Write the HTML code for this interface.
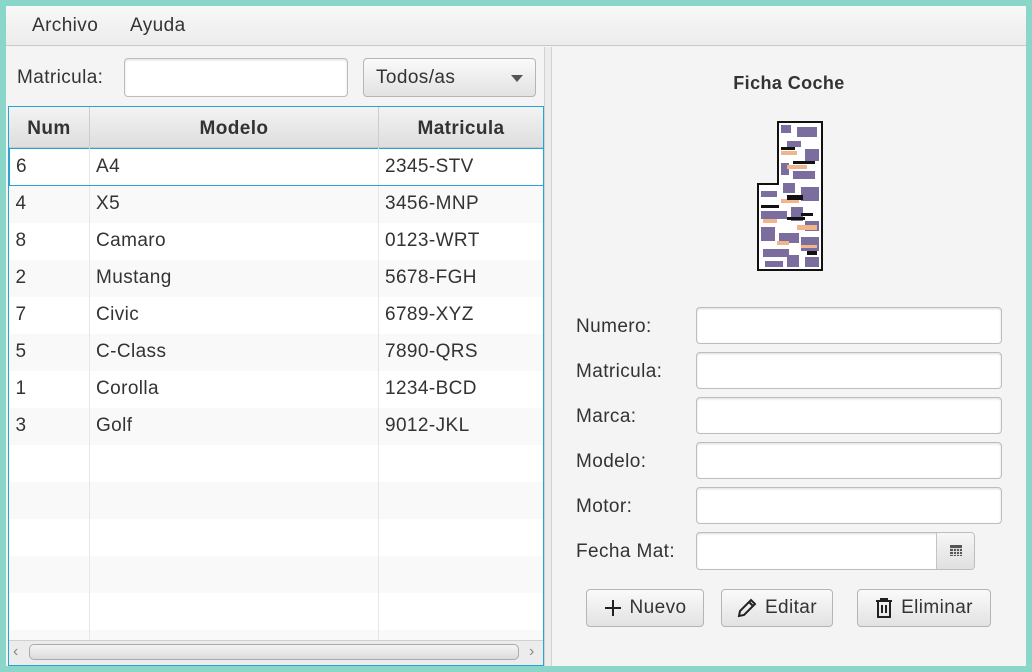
<!DOCTYPE html>
<html><head><style>
*{box-sizing:border-box;margin:0;padding:0}
body{width:1032px;height:672px;background:#8ad6c9;font-family:"Liberation Sans","DejaVu Sans",sans-serif;font-size:19px;letter-spacing:0.4px;color:#333;position:relative;overflow:hidden}
.win{position:absolute;left:6px;top:6px;width:1020px;height:660px;background:#f4f4f4}
.menu{position:absolute;left:0;top:0;width:1020px;height:40px;background:linear-gradient(#f8f8f8,#ececec);border-bottom:1px solid #c8c8c8}
.menu span{position:absolute;top:9px}
.abs{position:absolute}
.tf{position:absolute;background:#fff;border:1px solid #bdbdbd;border-radius:4px;box-shadow:inset 0 1px 2px #ddd}
.btn{position:absolute;background:linear-gradient(#fafafa,#e2e2e2);border:1px solid #b5b5b5;border-radius:4px;display:flex;align-items:center;justify-content:center;gap:8px}
.lbl{position:absolute;left:570px}
table{border-collapse:collapse;position:absolute;left:4px;top:102px;width:533px;table-layout:fixed}
td{height:37px;border-right:1px solid #e6e6e6;padding-left:6px;white-space:nowrap}
tr:nth-child(even) td{background:#f9f9f9}
tr:nth-child(odd) td{background:#fff}
</style></head><body>
<div class="win">
<div class="menu"><span style="left:26px">Archivo</span><span style="left:124px">Ayuda</span></div>
<div class="abs" style="left:538px;top:41px;width:8px;height:619px;background:#ececec;border-left:1px solid #d2d2d2;border-right:1px solid #d2d2d2"></div>
<span class="abs" style="left:11px;top:61px">Matricula:</span>
<div class="tf" style="left:118px;top:52px;width:224px;height:39px"></div>
<div class="btn" style="left:357px;top:52px;width:173px;height:39px;justify-content:flex-start;padding-left:12px">Todos/as<span style="position:absolute;right:12px;top:16px;width:0;height:0;border-left:6px solid transparent;border-right:6px solid transparent;border-top:7px solid #555"></span></div>
<div class="abs" style="left:2px;top:100px;width:536px;height:560px;border:1px solid #29a3d6;background:#fff;overflow:hidden">
<div class="abs" style="left:0;top:0;width:534px;height:41px;background:linear-gradient(#f3f3f3,#dedede);border-bottom:1px solid #c8c8c8;font-weight:bold">
<span class="abs" style="left:0;width:80px;top:11px;text-align:center">Num</span>
<span class="abs" style="left:80px;width:289px;text-align:center;border-left:1px solid #ccc;height:40px;top:0;padding-top:11px">Modelo</span>
<span class="abs" style="left:369px;width:165px;top:0;padding-top:11px;height:40px;text-align:center;border-left:1px solid #ccc">Matricula</span>
</div>
<table style="left:0;top:41px;width:534px">
<colgroup><col style="width:80px"><col style="width:289px"><col style="width:165px"></colgroup>
<tr><td style="border:1px solid #29a3d6;border-right:1px solid #e6e6e6">6</td><td style="border-top:1px solid #29a3d6;border-bottom:1px solid #29a3d6">A4</td><td style="border:1px solid #29a3d6;border-left:0">2345-STV</td></tr>
<tr><td>4</td><td>X5</td><td>3456-MNP</td></tr>
<tr><td>8</td><td>Camaro</td><td>0123-WRT</td></tr>
<tr><td>2</td><td>Mustang</td><td>5678-FGH</td></tr>
<tr><td>7</td><td>Civic</td><td>6789-XYZ</td></tr>
<tr><td>5</td><td>C-Class</td><td>7890-QRS</td></tr>
<tr><td>1</td><td>Corolla</td><td>1234-BCD</td></tr>
<tr><td>3</td><td>Golf</td><td>9012-JKL</td></tr>
<tr><td></td><td></td><td></td></tr>
<tr><td></td><td></td><td></td></tr>
<tr><td></td><td></td><td></td></tr>
<tr><td></td><td></td><td></td></tr>
<tr><td></td><td></td><td></td></tr>
<tr><td></td><td></td><td></td></tr>
</table>
<div class="abs" style="left:0;top:533px;width:534px;height:26px;background:#ececec;border-top:1px solid #d0d0d0">
<span class="abs" style="left:4px;top:2px;color:#888;font-size:16px">‹</span>
<div class="abs" style="left:20px;top:3px;width:490px;height:16px;border:1px solid #aaa;border-radius:5px;background:linear-gradient(#f4f4f4,#dcdcdc)"></div>
<span class="abs" style="left:520px;top:2px;color:#888;font-size:16px">›</span>
</div>
</div>
<div class="abs" style="left:546px;top:67px;width:474px;text-align:center;font-weight:bold;font-size:18px">Ficha Coche</div>
<svg class="abs" style="left:751px;top:115px" width="66" height="150" viewBox="0 0 66 150">
<path d="M21 1H65V149H1V63H21Z" fill="#fff" stroke="#111" stroke-width="2"/>
<g fill="#7b6d9e">
<rect x="24" y="4" width="10" height="8"/><rect x="40" y="6" width="20" height="10"/><rect x="30" y="20" width="14" height="6"/><rect x="48" y="28" width="14" height="12"/><rect x="24" y="42" width="8" height="12"/><rect x="36" y="50" width="22" height="8"/><rect x="26" y="62" width="12" height="10"/><rect x="44" y="66" width="18" height="14"/><rect x="4" y="70" width="16" height="6"/><rect x="4" y="90" width="26" height="8"/><rect x="34" y="86" width="12" height="14"/><rect x="48" y="100" width="14" height="10"/><rect x="4" y="106" width="14" height="14"/><rect x="22" y="112" width="20" height="10"/><rect x="44" y="116" width="18" height="14"/><rect x="6" y="128" width="26" height="8"/><rect x="30" y="134" width="12" height="12"/><rect x="48" y="136" width="14" height="10"/><rect x="8" y="140" width="18" height="6"/>
</g>
<g fill="#f2b48a"><rect x="24" y="30" width="16" height="4"/><rect x="30" y="44" width="20" height="4"/><rect x="24" y="78" width="18" height="4"/><rect x="6" y="98" width="14" height="4"/><rect x="40" y="104" width="20" height="5"/><rect x="20" y="120" width="12" height="4"/><rect x="44" y="124" width="16" height="3"/></g>
<g fill="#111"><rect x="24" y="26" width="14" height="3"/><rect x="36" y="40" width="22" height="3"/><rect x="30" y="74" width="16" height="5"/><rect x="4" y="84" width="18" height="3"/><rect x="30" y="96" width="18" height="3"/><rect x="44" y="92" width="12" height="3"/><rect x="50" y="130" width="10" height="4"/></g>
</svg>
<span class="lbl" style="top:310px">Numero:</span>
<span class="lbl" style="top:355px">Matricula:</span>
<span class="lbl" style="top:400px">Marca:</span>
<span class="lbl" style="top:445px">Modelo:</span>
<span class="lbl" style="top:490px">Motor:</span>
<span class="lbl" style="top:535px">Fecha Mat:</span>
<div class="tf" style="left:690px;top:301px;width:306px;height:37px"></div>
<div class="tf" style="left:690px;top:346px;width:306px;height:37px"></div>
<div class="tf" style="left:690px;top:391px;width:306px;height:37px"></div>
<div class="tf" style="left:690px;top:436px;width:306px;height:37px"></div>
<div class="tf" style="left:690px;top:481px;width:306px;height:37px"></div>
<div class="tf" style="left:690px;top:526px;width:279px;height:38px;overflow:hidden"><div class="abs" style="right:0;top:0;width:38px;height:36px;background:linear-gradient(#f6f6f6,#e0e0e0);border-left:1px solid #c4c4c4"><svg class="abs" style="left:13px;top:12px" width="12" height="11"><rect width="12" height="11" fill="#555"/><g stroke="#ddd" stroke-width="1"><path d="M0 3.5H12M0 6.5H12M0 9.5H12M3.5 3V11M6.5 3V11M9.5 3V11"/></g></svg></div></div>
<div class="btn" style="left:580px;top:583px;width:118px;height:38px"><svg width="18" height="18"><path d="M9 1V17M1 9H17" stroke="#222" stroke-width="2"/></svg>Nuevo</div>
<div class="btn" style="left:715px;top:583px;width:112px;height:38px"><svg width="20" height="20"><path d="M2 18L3 13L14 2L18 6L7 17Z M12 4L16 8" fill="none" stroke="#222" stroke-width="2"/></svg>Editar</div>
<div class="btn" style="left:851px;top:583px;width:134px;height:38px"><svg width="18" height="20"><path d="M1 3H17M6 3V1H12V3M3 3V19H15V3M7 7V15M11 7V15" fill="none" stroke="#222" stroke-width="2"/></svg>Eliminar</div>
</div>
</body></html>
